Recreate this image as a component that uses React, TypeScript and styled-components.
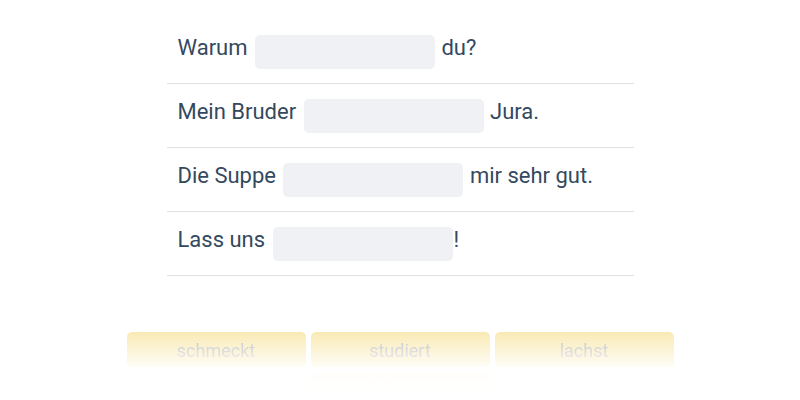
import React from 'react';
import styled, { createGlobalStyle } from 'styled-components';

const GlobalStyle = createGlobalStyle`
  html, body {
    margin: 0;
    padding: 0;
    background: #ffffff;
    font-family: Roboto, "Liberation Sans", sans-serif;
  }
`;

const Page = styled.div`
  width: 800px;
  height: 400px;
  overflow: hidden;
  display: flex;
  flex-direction: column;
  align-items: center;
`;

const SentenceList = styled.div`
  width: 467px;
  margin-top: 20px;
  display: flex;
  flex-direction: column;
`;

const SentenceRow = styled.div`
  height: 63px;
  display: flex;
  align-items: center;
  padding: 0 11px;
  border-bottom: 1px solid #e0e0e3;
  font-size: 22px;
  color: #34495e;
  white-space: pre;
`;

const Fragment = styled.span`
  padding-bottom: 9px;
`;

const Blank = styled.span`
  display: inline-block;
  width: 180px;
  height: 34px;
  margin: 0 1px 0 2px;
  border-radius: 5px;
  background: #f0f1f5;
`;

const fade = `linear-gradient(
    to bottom,
    rgba(0, 0, 0, 0.5) 0px,
    rgba(0, 0, 0, 0.06) 35px,
    rgba(0, 0, 0, 0.02) 45px,
    rgba(0, 0, 0, 0) 62px
  )`;

const WordBank = styled.div`
  width: 547px;
  margin-top: 56px;
  display: flex;
  flex-wrap: wrap;
  justify-content: center;
  gap: 5px;
  -webkit-mask-image: ${fade};
  mask-image: ${fade};
`;

const WordTile = styled.div`
  width: 179px;
  height: 35px;
  padding-top: 2px;
  box-sizing: border-box;
  border-radius: 5px;
  background: #f3d56b;
  color: #737a84;
  font-size: 18px;
  display: flex;
  align-items: center;
  justify-content: center;
`;

const sentences: [string, string][] = [
  ['Warum ', ' du?'],
  ['Mein Bruder ', ' Jura.'],
  ['Die Suppe ', ' mir sehr gut.'],
  ['Lass uns ', '!'],
];

const words = ['schmeckt', 'studiert', 'lachst', 'telefonieren'];

const App = () => {
  return (
    <>
      <GlobalStyle />
      <Page>
        <SentenceList>
          {sentences.map(([before, after]) => (
            <SentenceRow key={before}>
              <Fragment>{before}</Fragment>
              <Blank />
              <Fragment>{after}</Fragment>
            </SentenceRow>
          ))}
        </SentenceList>
        <WordBank>
          {words.map((word) => (
            <WordTile key={word}>{word}</WordTile>
          ))}
        </WordBank>
      </Page>
    </>
  );
};

export default App;
